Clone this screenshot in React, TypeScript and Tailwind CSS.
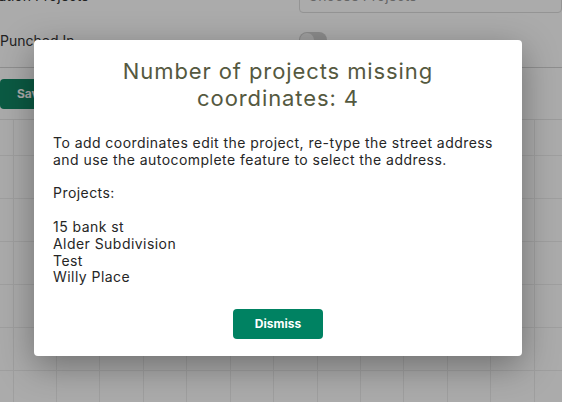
const COLS = 13;
const ROWS = 7;

function CalendarGrid() {
  const cells: JSX.Element[] = [];
  for (let r = 0; r < ROWS; r++) {
    cells.push(<div key={`g-${r}`} className="border-b border-[#eeeeee]" />);
    for (let c = 0; c < COLS; c++) {
      cells.push(<div key={`c-${r}-${c}`} className="border-b border-l border-[#eeeeee]" />);
    }
  }
  return (
    <div className="mt-[10px] grid grid-cols-[12.5px_repeat(13,43.45px)] grid-rows-[36px_repeat(6,43px)] border-t border-[#e8e8e8]">
      {cells}
    </div>
  );
}

function Page() {
  return (
    <div className="flex flex-col text-[14px] text-[#333333]">
      <div className="-mt-[23px] flex h-[36px] items-center">
        <div className="-ml-[26px] w-[325px] shrink-0">Location Projects</div>
        <div className="flex h-[36px] flex-1 items-center rounded-[4px] border border-[#dddddd] px-[8px] text-[#999999]">
          Choose Projects
        </div>
      </div>
      <div className="flex h-[55px] items-center border-b border-[#d4d4d4]">
        <div className="w-[299px] shrink-0">Punched In</div>
        <div className="flex h-[16px] w-[28px] items-center rounded-full bg-[#cfcfcf] p-[1px]">
          <div className="h-[14px] w-[14px] rounded-full bg-[#eeeeee]" />
        </div>
      </div>
      <div className="mt-[11px] flex">
        <div className="flex h-[30px] w-[72px] items-center rounded-[4px] bg-[#118765] px-[17px] text-[12px] font-bold text-white">
          Save
        </div>
      </div>
      <CalendarGrid />
    </div>
  );
}

export default function App() {
  return (
    <div className="relative h-[402px] w-[562px] overflow-hidden bg-white font-['Inter',sans-serif]">
      <Page />
      <div className="absolute inset-0 flex items-start justify-center bg-black/[0.33] pr-[6px] pt-[40px]">
        <div className="flex w-[488px] flex-col rounded-[4px] bg-white px-[19px] pb-[17px] pt-[18px] shadow-[0_10px_35px_rgba(0,0,0,0.35)]">
          <h2 className="text-center text-[22px] leading-[27px] tracking-[0.9px] text-[#55593f]">
            Number of projects missing
            <br />
            coordinates: 4
          </h2>
          <div className="mt-[23px] text-[14px] leading-[16.8px] tracking-[0.45px] text-[#262626]">
            <div>To add coordinates edit the project, re-type the street address</div>
            <div>and use the autocomplete feature to select the address.</div>
            <div>&nbsp;</div>
            <div>Projects:</div>
            <div>&nbsp;</div>
            <div>15 bank st</div>
            <div>Alder Subdivision</div>
            <div>Test</div>
            <div>Willy Place</div>
          </div>
          <div className="mt-[23px] flex justify-center">
            <button className="flex h-[30px] w-[90px] items-center justify-center rounded-[4px] bg-[#008262] text-[12px] font-bold text-white">
              Dismiss
            </button>
          </div>
        </div>
      </div>
    </div>
  );
}
